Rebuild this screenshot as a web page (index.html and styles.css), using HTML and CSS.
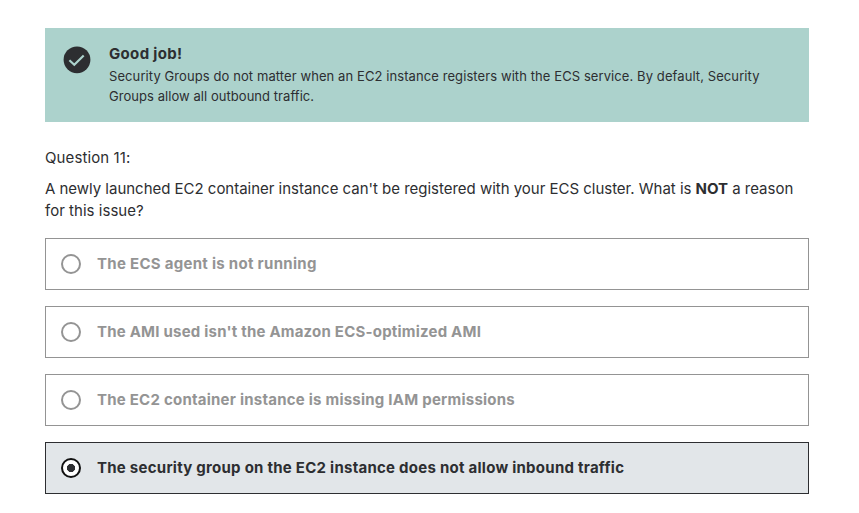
FILE: index.html
```html
<!DOCTYPE html>
<html lang="en">
<head>
<meta charset="utf-8">
<title>Quiz</title>
<link rel="stylesheet" href="styles.css">
</head>
<body>
<main class="quiz">
  <section class="alert">
    <svg class="alert-icon" viewBox="0 0 28 28"><circle cx="14" cy="13.8" r="13.4" fill="#2d2e31"/><path d="M6.4 14.2l4.9 4.5 9.4-9.2" fill="none" stroke="#acd2cc" stroke-width="2.2"/></svg>
    <div>
      <h2 class="alert-title">Good job!</h2>
      <p class="alert-text">Security Groups do not matter when an EC2 instance registers with the ECS service. By default, Security<br><span class="alert-end">Groups allow all outbound traffic.</span></p>
    </div>
  </section>
  <p class="number">Question 11:</p>
  <p class="question">A newly launched EC2 container instance can't be registered with your ECS cluster. What is <b>NOT</b> a reason<br><span class="question-end">for this issue?</span></p>
  <ul class="answers">
    <li class="answer"><span class="radio"></span><span class="label label-agent">The ECS agent is not running</span></li>
    <li class="answer"><span class="radio"></span><span class="label label-ami">The AMI used isn't the Amazon ECS-optimized AMI</span></li>
    <li class="answer"><span class="radio"></span><span class="label label-iam">The EC2 container instance is missing IAM permissions</span></li>
    <li class="answer selected"><span class="radio"></span><span class="label">The security group on the EC2 instance does not allow inbound traffic</span></li>
  </ul>
</main>
</body>
</html>
```
FILE: styles.css
```css
* { box-sizing: border-box; }
body { margin: 0; background: #fff; color: #2d2e31; font-family: Inter, sans-serif; }
.quiz { width: 764px; margin: 28px 0 0 45px; }
.alert { display: flex; gap: 18px; height: 94px; padding: 16px 18px; background: #acd2cc; }
.alert-icon { width: 28px; height: 28px; margin-top: 2px; flex: none; }
.alert-title { margin: 0; font-size: 15px; line-height: 20px; font-weight: 700; letter-spacing: 0.33px; }
.alert-text { margin: 2px 0 0; font-size: 13px; line-height: 20px; white-space: nowrap; letter-spacing: 0.088px; }
.alert-end { letter-spacing: 0.05px; }
.number { margin: 25px 0 0; font-size: 15px; line-height: 22px; letter-spacing: 0.1px; }
.question { margin: 9px 0 0; font-size: 15px; line-height: 22px; white-space: nowrap; letter-spacing: -0.02px; }
.question-end { letter-spacing: 0.03px; }
.answers { display: grid; gap: 16px; margin: 16px 0 0; padding: 0; list-style: none; }
.answer { display: flex; align-items: center; gap: 16px; height: 52px; padding: 0 15px; border: 1px solid #949494; color: #949494; font-size: 15px; font-weight: 700; }
.label { padding-bottom: 2px; letter-spacing: 0.255px; }
.label-agent { letter-spacing: 0.29px; }
.label-ami { letter-spacing: 0.215px; }
.label-iam { letter-spacing: 0.235px; }
.radio { width: 20px; height: 20px; border: 2px solid #949494; border-radius: 50%; }
.selected { background: #e2e6e9; border-color: #2d2e31; color: #2d2e31; }
.selected .radio { border-color: #111; background: radial-gradient(circle, #2d2e31 3.8px, #fff 4.4px); }
```
